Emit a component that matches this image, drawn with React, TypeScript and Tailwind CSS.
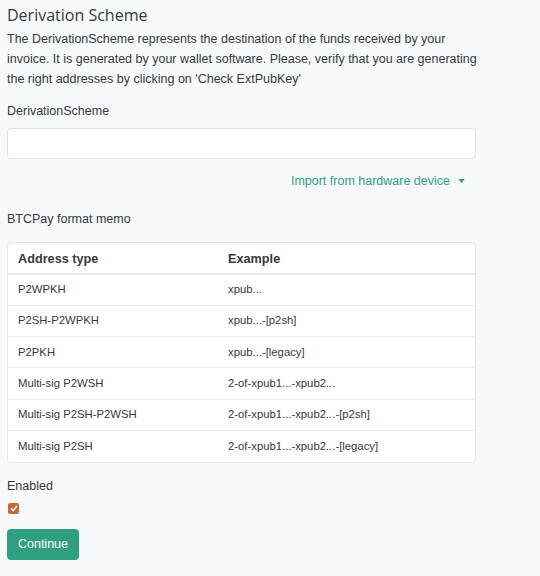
import React from 'react';

const rows = [
  { type: 'P2WPKH', example: 'xpub...' },
  { type: 'P2SH-P2WPKH', example: 'xpub...-[p2sh]' },
  { type: 'P2PKH', example: 'xpub...-[legacy]' },
  { type: 'Multi-sig P2WSH', example: '2-of-xpub1...-xpub2...' },
  { type: 'Multi-sig P2SH-P2WSH', example: '2-of-xpub1...-xpub2...-[p2sh]' },
  { type: 'Multi-sig P2SH', example: '2-of-xpub1...-xpub2...-[legacy]' },
];

const App = () => {
  return (
    <div className="min-h-[576px] bg-[#f8f9fa] text-[#343a40] font-['Liberation_Sans',Arial,sans-serif]">
      <div className="w-[469px] ml-[7px] pt-[4px]">
        <h2 className="font-['Open_Sans',sans-serif] text-[16px] leading-[22px] text-[#343a40]">Derivation Scheme</h2>
        <p className="mt-[3px] text-[12.5px] leading-[20px] w-[480px]">
          The DerivationScheme represents the destination of the funds received by your invoice. It is generated by your wallet software. Please, verify that you are generating the right addresses by clicking on 'Check ExtPubKey'
        </p>

        <label className="block mt-[12px] text-[12.5px] leading-[20px]">DerivationScheme</label>
        <input
          type="text"
          className="block mt-[7px] w-full h-[31px] bg-white border border-[#dee2e6] rounded-[4px] px-3 outline-none"
        />

        <div className="flex justify-end mt-[12px] pr-[11px]">
          <button className="flex items-center gap-[8px] text-[12.5px] leading-[20px] text-[#329f80]">
            Import from hardware device
            <svg width="7" height="4" viewBox="0 0 8 5"><path d="M0 0h8L4 5z" fill="#329f80" /></svg>
          </button>
        </div>

        <label className="block mt-[18px] text-[12.5px] leading-[20px]">BTCPay format memo</label>

        <div className="mt-[13px] bg-white border border-[#e6e9ec] rounded-[4px] overflow-hidden">
          <table className="w-full text-left text-[11.3px]">
            <thead>
              <tr className="border-b-2 border-[#e9ecef]">
                <th className="h-[31px] pt-[3px] pl-[10px] w-[220px] text-[12.7px] font-bold">Address type</th>
                <th className="h-[31px] pt-[3px] text-[12.7px] font-bold">Example</th>
              </tr>
            </thead>
            <tbody>
              {rows.map((r, i) => (
                <tr key={r.type} className={i > 0 ? 'border-t border-[#e9ecef]' : ''}>
                  <td className="h-[31.3px] pl-[10px]">{r.type}</td>
                  <td className="h-[31.3px]">{r.example}</td>
                </tr>
              ))}
            </tbody>
          </table>
        </div>

        <label className="block mt-[13px] text-[12.5px] leading-[20px]">Enabled</label>
        <div className="mt-[7px] w-[11px] h-[11px] ml-[1px] rounded-[2px] bg-[#d0653a] flex items-center justify-center">
          <svg width="8" height="7" viewBox="0 0 8 7"><path d="M1 3.5l2 2L7 1" stroke="white" strokeWidth="1.6" fill="none" /></svg>
        </div>

        <button className="mt-[15px] w-[72px] h-[31px] rounded-[4px] bg-[#2fa07f] text-white text-[12.5px]">Continue</button>
      </div>
    </div>
  );
};

export default App;
